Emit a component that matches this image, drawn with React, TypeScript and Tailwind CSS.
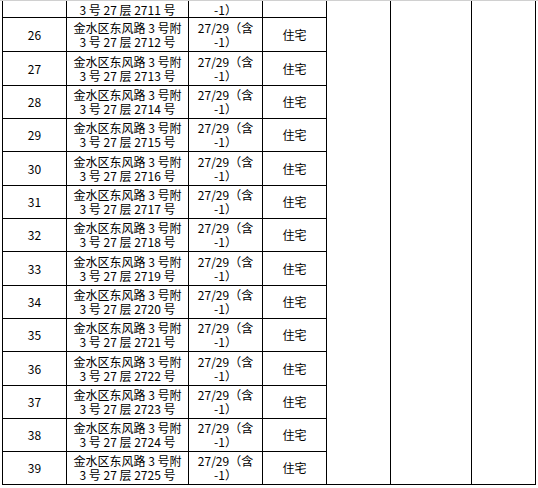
import React from "react";

const heights = [34, 34, 33, 33, 34, 33, 33, 34, 33, 33, 34, 33, 33, 33];

const font = {
  fontFamily: '"Noto Sans CJK SC", "Liberation Sans", sans-serif',
};

function Row({ n, h }: { n: number; h: number }) {
  const unit = 2711 + (n - 25);
  return (
    <div
      className="flex border-b border-black box-border"
      style={{ height: h }}
    >
      <div className="w-[64px] shrink-0 border-r border-black flex items-center justify-center">
        {n}
      </div>
      <div className="w-[122px] shrink-0 border-r border-black flex flex-col items-center justify-center">
        <span>金水区东风路 3 号附</span>
        <span>3 号 27 层 {unit} 号</span>
      </div>
      <div className="w-[74px] shrink-0 border-r border-black flex flex-col items-center justify-center">
        <span>27/29（含</span>
        <span>-1）</span>
      </div>
      <div className="w-[64px] shrink-0 border-r border-black flex items-center justify-center">
        住宅
      </div>
    </div>
  );
}

export default function App() {
  const rows = Array.from({ length: 14 }, (_, i) => 26 + i);
  return (
    <div
      className="w-[538px] h-[488px] bg-white text-black text-[12px] leading-[14px] overflow-hidden"
      style={font}
    >
      <div className="h-px w-full bg-[#d0d0d0]" />
      <div className="flex pl-[2px]">
        <div className="flex flex-col border-l border-black">
          <div className="flex h-[17px] border-b border-black">
            <div className="w-[64px] shrink-0 border-r border-black" />
            <div className="w-[122px] shrink-0 border-r border-black flex items-end justify-center overflow-hidden">
              <span>3 号 27 层 2711 号</span>
            </div>
            <div className="w-[74px] shrink-0 border-r border-black flex items-end justify-center overflow-hidden">
              <span>-1）</span>
            </div>
            <div className="w-[64px] shrink-0 border-r border-black" />
          </div>
          {rows.map((n, i) => (
            <Row key={n} n={n} h={heights[i]} />
          ))}
        </div>
        <div className="flex h-[484px] border-b border-black">
          <div className="w-[64px] border-r border-black" />
          <div className="w-[81px] border-r border-black" />
          <div className="w-[64px] border-r border-black" />
        </div>
      </div>
    </div>
  );
}
